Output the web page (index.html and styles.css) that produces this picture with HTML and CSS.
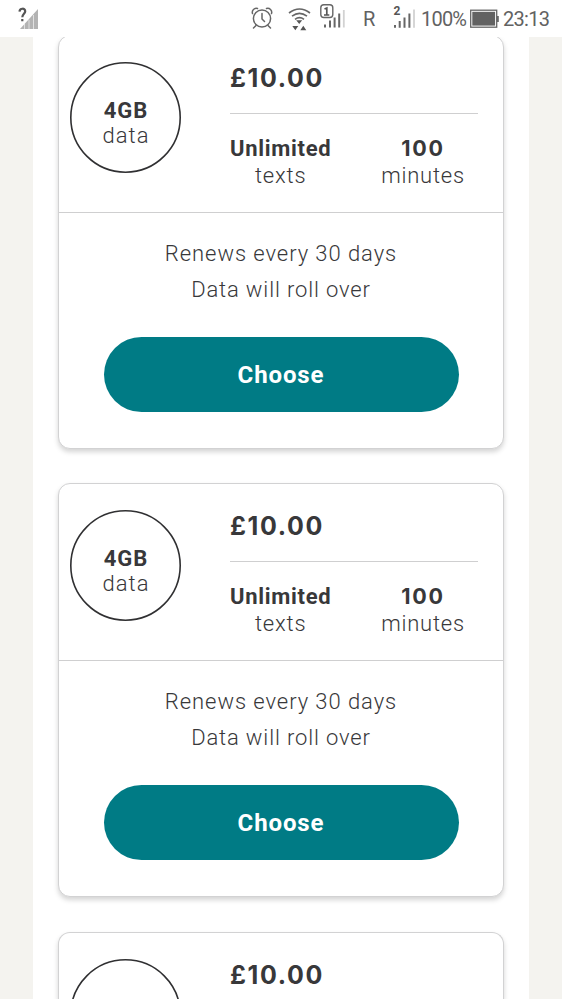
FILE: index.html
```html
<!DOCTYPE html>
<html lang="en">
<head>
<meta charset="utf-8">
<title>Plans</title>
<link rel="stylesheet" href="styles.css">
</head>
<body>
<header class="status">
  <svg class="no-signal" width="22" height="24" viewBox="0 0 22 24">
    <path d="M2 22 20 2v20z" fill="#b3b3b3"/>
    <path d="M6.500 17v5M11 13v9M15.500 8v14" stroke="#fff" stroke-width=".6"/>
    <path d="M1.500 4.600C1.700.8 7.400.8 7.200 4.400 7.100 6.700 4.300 6.900 4.300 10.300M4.300 12v2.300" fill="none" stroke="#555" stroke-width="2.200"/>
  </svg>
  <svg class="icons" width="176" height="34" viewBox="246 0 176 34">
    <g fill="none" stroke="#666" stroke-width="1.5" stroke-linecap="round">
      <circle cx="262" cy="18.500" r="8.600"/>
      <path d="M262 13.500v5.500l2.500 2.500M256 25.500l-2.500 2.500M268 25.500l2.500 2.500M252.500 13.500c-1-3 2-6 5-5M271.500 13.500c1-3-2-6-5-5"/>
    </g>
    <g fill="none" stroke="#666" stroke-width="1.600">
      <path d="M289 13q10.500-8 21 0M292 16.200q7.500-5.600 15 0M295 19.300q4.500-3.300 9 0"/>
    </g>
    <path d="M296.200 20.300h6l-3 3.800zM292.300 26h6l-3 4.200zM300.300 30.300h6l-3-4.500z" fill="#555"/>
    <rect x="320.800" y="4.700" width="12" height="12.800" rx="3" fill="none" stroke="#666" stroke-width="1.400"/>
    <path d="M324.500 9l2.300-1v7M324 15h5.300" fill="none" stroke="#555" stroke-width="1.700"/>
    <path d="M325 24.500v3M330 20.500v7M334.600 17.500v10M339.200 13.500v14" stroke="#666" stroke-width="2"/>
    <path d="M343.800 10v17.500" stroke="#d2d2d2" stroke-width="1.800"/>
    <path d="M395 25v2.800M399.700 21v6.800M404.500 17.500v10.300M409.400 13.500v14.300" stroke="#666" stroke-width="2"/>
    <path d="M414 9.500v18.300" stroke="#d2d2d2" stroke-width="1.800"/>
    <text x="363" y="26" class="roaming">R</text>
    <text x="393.500" y="15" class="sim">2</text>
  </svg>
  <span class="percent">100%</span>
  <svg class="battery" width="30" height="20" viewBox="0 0 30 20">
    <rect x=".7" y="1.200" width="26" height="17" fill="#fff" stroke="#666" stroke-width="1.300"/>
    <rect x="2.300" y="2.800" width="22.800" height="13.800" fill="#626262"/>
    <path d="M27 7h1.800v6H27z" fill="#666"/>
  </svg>
  <span class="clock">23:13</span>
</header>
<main class="panel">
  <article class="card">
    <section class="summary">
      <div class="data">
        <svg class="ring" viewBox="0 0 111 111"><circle cx="55.500" cy="55.500" r="54.700"/></svg>
        <b>4GB</b><span>data</span>
      </div>
      <div class="details">
        <div class="price">£10.00</div>
        <div class="stats">
          <div class="stat"><b>Unlimited</b><span>texts</span></div>
          <div class="stat"><b class="count">100</b><span>minutes</span></div>
        </div>
      </div>
    </section>
    <section class="terms">
      <p class="renews">Renews every 30 days</p>
      <p class="rollover">Data will roll over</p>
      <button class="choose">Choose</button>
    </section>
  </article>
  <article class="card">
    <section class="summary">
      <div class="data">
        <svg class="ring" viewBox="0 0 111 111"><circle cx="55.500" cy="55.500" r="54.700"/></svg>
        <b>4GB</b><span>data</span>
      </div>
      <div class="details">
        <div class="price">£10.00</div>
        <div class="stats">
          <div class="stat"><b>Unlimited</b><span>texts</span></div>
          <div class="stat"><b class="count">100</b><span>minutes</span></div>
        </div>
      </div>
    </section>
    <section class="terms">
      <p class="renews">Renews every 30 days</p>
      <p class="rollover">Data will roll over</p>
      <button class="choose">Choose</button>
    </section>
  </article>
  <article class="card next">
    <section class="summary">
      <div class="data">
        <svg class="ring" viewBox="0 0 111 111"><circle cx="55.500" cy="55.500" r="54.700"/></svg>
      </div>
      <div class="details">
        <div class="price">£10.00</div>
      </div>
    </section>
  </article>
</main>
</body>
</html>
```
FILE: styles.css
```css
* { box-sizing: border-box; }
body {
  margin: 0;
  height: 999px;
  overflow: hidden;
  background: #f4f3ef;
  color: #38383a;
  font-family: Roboto, "Liberation Sans", sans-serif;
}
.status {
  position: relative;
  z-index: 1;
  display: flex;
  height: 37px;
  background: #fff;
  color: #626262;
  font-size: 20px;
  line-height: 39px;
}
.no-signal { margin: 7px 0 0 18px; }
.icons { margin-left: 206px; }
.roaming { font-size: 20px; fill: #626262; }
.sim { font-size: 12px; font-weight: 700; fill: #555; }
.percent { width: 48px; margin-left: -1px; letter-spacing: -0.8px; }
.battery { margin: 9px 0 0 1px; }
.clock { margin-left: 3px; letter-spacing: -0.7px; }
.panel {
  display: flex;
  flex-direction: column;
  gap: 34.4px;
  width: 496px;
  height: 964px;
  overflow: hidden;
  margin: -2px auto 0 33px;
  padding: 0 25px;
  background: #fff;
}
.card {
  flex: 0 0 414px;
  width: 446px;
  border: 1.5px solid #d2d2d3;
  border-radius: 12px;
  background: #fff;
  box-shadow: 0 3px 5px rgba(0, 0, 0, .17);
}
.next {
  flex-basis: 68px;
  overflow: hidden;
  border-bottom: 0;
  border-radius: 12px 12px 0 0;
}
.summary {
  display: flex;
  height: 177px;
  padding: 26px 24px 0 11px;
  border-bottom: 1.5px solid #cfcfd0;
}
.data {
  position: relative;
  display: flex;
  flex-direction: column;
  align-items: center;
  width: 111px;
  height: 111px;
  padding: 36px 0 0 1px;
  font-size: 22px;
  line-height: 25px;
  letter-spacing: .9px;
}
.ring { position: absolute; inset: 0; }
.ring circle { fill: none; stroke: #303032; stroke-width: 1.6; }
.data span { font-weight: 300; letter-spacing: 1px; }
.details { width: 248px; margin-left: 49px; }
.price {
  height: 52px;
  border-bottom: 1.5px solid #cfcfd0;
  font-family: Inter, Roboto, sans-serif;
  font-size: 25px;
  font-weight: 700;
  line-height: 33px;
  letter-spacing: 1.65px;
}
.stats {
  display: flex;
  justify-content: space-between;
  padding: 22px 13px 0 0;
}
.stat {
  display: flex;
  flex-direction: column;
  align-items: center;
  font-size: 22px;
  line-height: 26.7px;
  letter-spacing: .7px;
}
.count {
  height: 26.7px;
  font-family: Inter, Roboto, sans-serif;
  font-size: 21.5px;
  line-height: 25.5px;
  letter-spacing: 1.8px;
}
.stat span { font-weight: 300; letter-spacing: .8px; }
.terms {
  display: flex;
  flex-direction: column;
  align-items: center;
  padding-top: 23px;
}
.terms p {
  margin: 0;
  font-size: 22px;
  font-weight: 300;
  line-height: 36px;
  letter-spacing: .93px;
}
.terms .rollover { letter-spacing: .86px; }
.choose {
  width: 355px;
  height: 75px;
  margin-top: 29px;
  padding: 0;
  border: 0;
  border-radius: 38px;
  background: #007b85;
  color: #fff;
  font: 700 24px/76px Roboto, "Liberation Sans", sans-serif;
  letter-spacing: .9px;
}
```
